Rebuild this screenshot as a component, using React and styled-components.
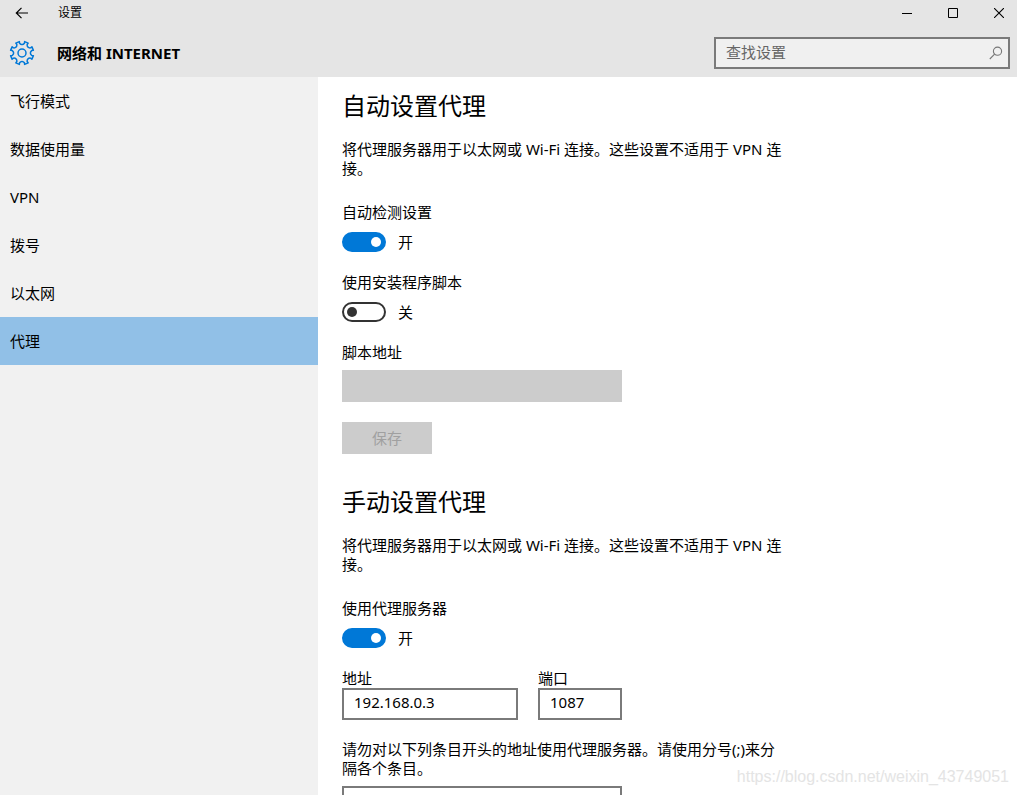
import React, { useState } from 'react'
import styled, { createGlobalStyle } from 'styled-components'

const GlobalStyle = createGlobalStyle`
    * {
        box-sizing: border-box;
    }

    body {
        margin: 0;
        background: #ffffff;
        color: #000000;
        font-family: "Noto Sans", "Noto Sans CJK SC", sans-serif;
        font-size: 15px;
        line-height: 20px;
    }

    button,
    input {
        font: inherit;
        color: inherit;
    }
`

const navItems = ['飞行模式', '数据使用量', 'VPN', '拨号', '以太网', '代理']

// outline of a gear with eight teeth, drawn around 0,0
function gearPath() {
    const point = (deg, radius) => {
        const a = (deg * Math.PI) / 180
        return `${(Math.sin(a) * radius).toFixed(2)} ${(-Math.cos(a) * radius).toFixed(2)}`
    }
    let d = ''
    for (let i = 0; i < 8; i++) {
        const c = i * 45
        d += `${i === 0 ? 'M' : 'L'}${point(c - 13, 11.7)}`
        d += ` L${point(c - 14, 10)} Q${point(c - 9, 8.4)} ${point(c, 8.4)}`
        d += ` Q${point(c + 9, 8.4)} ${point(c + 14, 10)}`
        d += ` L${point(c + 13, 11.7)} L${point(c + 32, 11.7)} `
    }
    return d + 'Z'
}

function GearIcon() {
    return (
        <svg width="26" height="26" viewBox="-13 -13 26 26" fill="none" stroke="#0078d7" strokeWidth="1.5" strokeLinejoin="round">
            <path d={gearPath()} />
            <circle r="4" />
        </svg>
    )
}

function Toggle({ label, initial }) {
    const [on, setOn] = useState(initial)

    return (
        <ToggleField>
            <span>{label}</span>
            <ToggleRow>
                <Switch
                    type="checkbox"
                    role="switch"
                    checked={on}
                    onChange={e => setOn(e.target.checked)}
                />
                <span>{on ? '开' : '关'}</span>
            </ToggleRow>
        </ToggleField>
    )
}

function App() {
    const [active, setActive] = useState('代理')
    const [address, setAddress] = useState('192.168.0.3')
    const [port, setPort] = useState('1087')
    const [exceptions, setExceptions] = useState('')

    return (
        <Window>
            <GlobalStyle />
            <Header>
                <TitleBar>
                    <BackButton type="button" aria-label="返回">
                        <svg width="14" height="12" viewBox="0 0 14 12" fill="none" stroke="#000" strokeWidth="1.2">
                            <path d="M13 6H1.5M6.5 .8L1.3 6l5.2 5.2" />
                        </svg>
                    </BackButton>
                    <WindowName>设置</WindowName>
                    <WindowButtons>
                        <WindowButton type="button" aria-label="最小化">
                            <svg width="10" height="10" stroke="#000"><path d="M0 5.5h10" /></svg>
                        </WindowButton>
                        <WindowButton type="button" aria-label="最大化">
                            <svg width="10" height="10" fill="none" stroke="#000"><path d="M.5 .5h9v9h-9z" /></svg>
                        </WindowButton>
                        <WindowButton type="button" aria-label="关闭">
                            <svg width="10" height="10" stroke="#000" strokeWidth="1.1"><path d="M0 0l10 10M10 0L0 10" /></svg>
                        </WindowButton>
                    </WindowButtons>
                </TitleBar>
                <HeadingRow>
                    <GearIcon />
                    <PageTitle>网络和 INTERNET</PageTitle>
                    <SearchBox>
                        <input type="text" placeholder="查找设置" aria-label="查找设置" />
                        <svg width="14" height="14" viewBox="0 0 14 14" fill="none" stroke="#777" strokeWidth="1.1">
                            <circle cx="8.5" cy="5.2" r="4.1" />
                            <path d="M5.6 8.2L.8 13" />
                        </svg>
                    </SearchBox>
                </HeadingRow>
            </Header>

            <Body>
                <Sidebar>
                    {navItems.map(item => (
                        <NavItem key={item} type="button" $active={item === active} onClick={() => setActive(item)}>
                            {item}
                        </NavItem>
                    ))}
                </Sidebar>

                <Content>
                    <Section>
                        <SectionTitle>自动设置代理</SectionTitle>
                        <Description>将代理服务器用于以太网或 Wi-Fi 连接。这些设置不适用于 VPN 连接。</Description>
                        <Fields>
                            <Toggle label="自动检测设置" initial={true} />
                            <Toggle label="使用安装程序脚本" initial={false} />
                            <Field $gap="8px">
                                <label htmlFor="script">脚本地址</label>
                                <TextBox id="script" type="text" disabled />
                            </Field>
                            <SaveButton type="button" disabled>保存</SaveButton>
                        </Fields>
                    </Section>

                    <Section>
                        <SectionTitle>手动设置代理</SectionTitle>
                        <Description>将代理服务器用于以太网或 Wi-Fi 连接。这些设置不适用于 VPN 连接。</Description>
                        <Fields>
                            <Toggle label="使用代理服务器" initial={true} />
                            <FieldRow>
                                <Field>
                                    <label htmlFor="address">地址</label>
                                    <TextBox id="address" type="text" $width="176px" value={address} onChange={e => setAddress(e.target.value)} />
                                </Field>
                                <Field>
                                    <label htmlFor="port">端口</label>
                                    <TextBox id="port" type="text" $width="84px" value={port} onChange={e => setPort(e.target.value)} />
                                </Field>
                            </FieldRow>
                            <Field $gap="8px">
                                <LongLabel htmlFor="exceptions">请勿对以下列条目开头的地址使用代理服务器。请使用分号(;)来分隔各个条目。</LongLabel>
                                <TextBox id="exceptions" type="text" value={exceptions} onChange={e => setExceptions(e.target.value)} />
                            </Field>
                        </Fields>
                    </Section>
                </Content>
            </Body>
            <Watermark>https://blog.csdn.net/weixin_43749051</Watermark>
        </Window>
    )
}

const Window = styled.div`
    position: relative;
    display: flex;
    flex-direction: column;
    height: 100vh;
    overflow: hidden;
`

const Header = styled.header`
    flex: none;
    background: #e5e5e5;
`

const TitleBar = styled.div`
    display: flex;
    align-items: center;
    height: 26px;
`

const BackButton = styled.button`
    display: flex;
    align-items: center;
    justify-content: center;
    width: 44px;
    height: 26px;
    padding: 0;
    border: none;
    background: transparent;
`

const WindowName = styled.span`
    margin-left: 14px;
    font-size: 12px;
`

const WindowButtons = styled.div`
    display: flex;
    gap: 10px;
    margin-left: auto;
`

const WindowButton = styled.button`
    display: flex;
    align-items: center;
    justify-content: center;
    width: 36px;
    height: 26px;
    padding: 0;
    border: none;
    background: transparent;
`

const HeadingRow = styled.div`
    display: flex;
    align-items: center;
    padding: 11px 7px 8px 9px;
`

const PageTitle = styled.h1`
    margin: 0 0 0 22px;
    font-size: 15px;
    font-weight: 700;
`

const SearchBox = styled.div`
    display: flex;
    align-items: center;
    width: 296px;
    height: 32px;
    margin-left: auto;
    padding: 0 5px 0 10px;
    border: 2px solid #7a7a7a;
    background: #f0f0f0;

    input {
        flex: 1;
        min-width: 0;
        padding: 0 0 2px;
        border: none;
        outline: none;
        background: transparent;

        &::placeholder {
            color: #666666;
            opacity: 1;
        }
    }
`

const Body = styled.div`
    display: flex;
    flex: 1;
    min-height: 0;
`

const Sidebar = styled.nav`
    display: flex;
    flex-direction: column;
    flex: none;
    width: 318px;
    background: #f1f1f1;
`

const NavItem = styled.button`
    height: 48px;
    padding: 0 10px;
    border: none;
    background: ${({ $active }) => ($active ? '#91c0e7' : 'transparent')};
    text-align: left;
`

const Content = styled.main`
    flex: 1;
    padding: 13px 24px;
    overflow-y: auto;
    scrollbar-width: none;
`

const Section = styled.section`
    max-width: 448px;
    margin-bottom: 32px;
`

const SectionTitle = styled.h2`
    margin: 0;
    font-size: 24px;
    font-weight: 400;
    line-height: 32px;
`

const Description = styled.p`
    margin: 18px 0 24px;
    line-height: 19px;
`

const Fields = styled.div`
    display: flex;
    flex-direction: column;
    align-items: flex-start;
    gap: 20px;
`

const Field = styled.div`
    display: flex;
    flex-direction: column;
    gap: ${({ $gap }) => $gap || '0'};
`

const LongLabel = styled.label`
    line-height: 19px;
`

const FieldRow = styled.div`
    display: flex;
    gap: 20px;
`

const ToggleField = styled.label`
    display: flex;
    flex-direction: column;
    gap: 10px;
`

const ToggleRow = styled.span`
    display: flex;
    align-items: center;
    gap: 12px;
`

const Switch = styled.input`
    appearance: none;
    display: flex;
    align-items: center;
    width: 44px;
    height: 20px;
    margin: 0;
    padding: 0 3px;
    border: 2px solid #333333;
    border-radius: 10px;
    background: #ffffff;

    &::before {
        content: '';
        width: 10px;
        height: 10px;
        border-radius: 50%;
        background: #333333;
    }

    &:checked {
        justify-content: flex-end;
        border-color: #0078d7;
        background: #0078d7;
    }

    &:checked::before {
        background: #ffffff;
    }
`

const TextBox = styled.input`
    width: ${({ $width }) => $width || '280px'};
    height: 32px;
    padding: 0 10px 4px;
    border: 2px solid #7a7a7a;
    border-radius: 0;
    outline: none;
    background: #ffffff;

    &:focus {
        border-color: #0078d7;
    }

    &:disabled {
        border-color: #cccccc;
        background: #cccccc;
    }
`

const SaveButton = styled.button`
    width: 90px;
    height: 32px;
    padding: 0;
    border: none;
    background: #cccccc;

    &:disabled {
        color: #a0a0a0;
    }
`

const Watermark = styled.span`
    position: absolute;
    right: 8px;
    bottom: 8px;
    color: #e4e4e4;
    font-family: "Liberation Sans", Arial, sans-serif;
    font-size: 16px;
    pointer-events: none;
`

export default App
